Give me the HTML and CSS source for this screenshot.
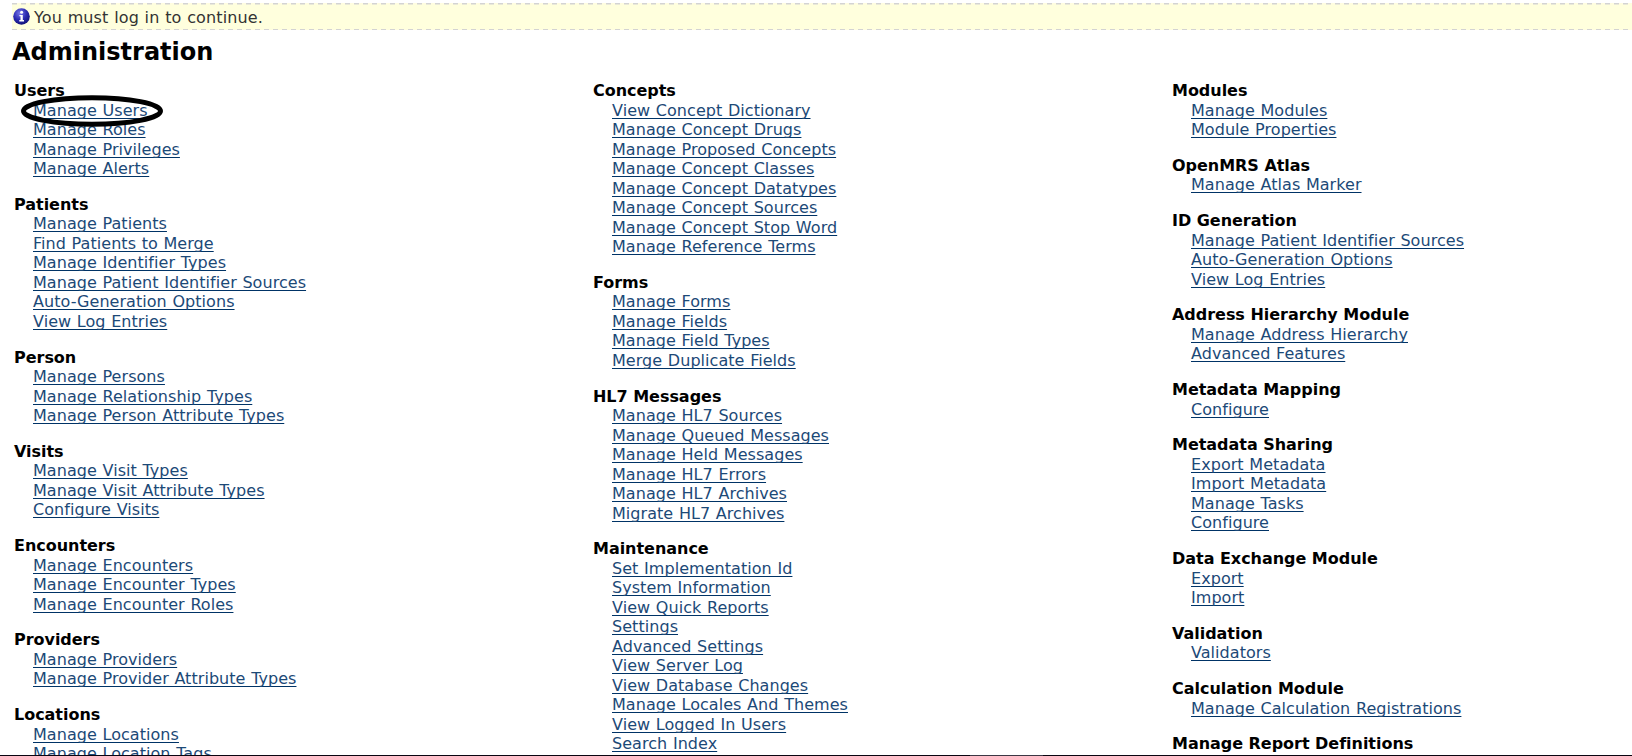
FILE: index.html
```html
<!DOCTYPE html>
<html lang="en">
<head>
<meta charset="utf-8">
<title>Administration</title>
<link rel="stylesheet" href="styles.css">
</head>
<body>
<div class="message">
<svg class="info" viewBox="0 0 17 17"><defs><radialGradient id="g" cx=".4" cy=".3" r=".75"><stop offset="0" stop-color="#7878e8"/><stop offset=".55" stop-color="#2a2ab0"/><stop offset="1" stop-color="#101070"/></radialGradient></defs><circle cx="8.5" cy="8.5" r="8.3" fill="url(#g)"/><circle cx="8.6" cy="4.2" r="1.5" fill="#fff"/><path d="M6.4 7h3.4v5h1.2v1.4H6.3V12h1.2V8.3H6.4z" fill="#fff"/></svg>
<span>You must log in to continue.</span>
</div>
<h1>Administration</h1>
<main class="columns">
<div class="column">
<section><h2>Users</h2><ul><li class="circled"><a href="#">Manage Users</a><svg class="ring" viewBox="0 0 144 32"><ellipse cx="72" cy="16" rx="68.5" ry="13.2"/></svg></li><li><a href="#">Manage Roles</a></li><li><a href="#">Manage Privileges</a></li><li><a href="#">Manage Alerts</a></li></ul></section>
<section><h2>Patients</h2><ul><li><a href="#">Manage Patients</a></li><li><a href="#">Find Patients to Merge</a></li><li><a href="#">Manage Identifier Types</a></li><li><a href="#">Manage Patient Identifier Sources</a></li><li><a href="#">Auto-Generation Options</a></li><li><a href="#">View Log Entries</a></li></ul></section>
<section><h2>Person</h2><ul><li><a href="#">Manage Persons</a></li><li><a href="#">Manage Relationship Types</a></li><li><a href="#">Manage Person Attribute Types</a></li></ul></section>
<section><h2>Visits</h2><ul><li><a href="#">Manage Visit Types</a></li><li><a href="#">Manage Visit Attribute Types</a></li><li><a href="#">Configure Visits</a></li></ul></section>
<section><h2>Encounters</h2><ul><li><a href="#">Manage Encounters</a></li><li><a href="#">Manage Encounter Types</a></li><li><a href="#">Manage Encounter Roles</a></li></ul></section>
<section><h2>Providers</h2><ul><li><a href="#">Manage Providers</a></li><li><a href="#">Manage Provider Attribute Types</a></li></ul></section>
<section><h2>Locations</h2><ul><li><a href="#">Manage Locations</a></li><li><a href="#">Manage Location Tags</a></li></ul></section>
</div>
<div class="column">
<section><h2>Concepts</h2><ul><li><a href="#">View Concept Dictionary</a></li><li><a href="#">Manage Concept Drugs</a></li><li><a href="#">Manage Proposed Concepts</a></li><li><a href="#">Manage Concept Classes</a></li><li><a href="#">Manage Concept Datatypes</a></li><li><a href="#">Manage Concept Sources</a></li><li><a href="#">Manage Concept Stop Word</a></li><li><a href="#">Manage Reference Terms</a></li></ul></section>
<section><h2>Forms</h2><ul><li><a href="#">Manage Forms</a></li><li><a href="#">Manage Fields</a></li><li><a href="#">Manage Field Types</a></li><li><a href="#">Merge Duplicate Fields</a></li></ul></section>
<section><h2>HL7 Messages</h2><ul><li><a href="#">Manage HL7 Sources</a></li><li><a href="#">Manage Queued Messages</a></li><li><a href="#">Manage Held Messages</a></li><li><a href="#">Manage HL7 Errors</a></li><li><a href="#">Manage HL7 Archives</a></li><li><a href="#">Migrate HL7 Archives</a></li></ul></section>
<section><h2>Maintenance</h2><ul><li><a href="#">Set Implementation Id</a></li><li><a href="#">System Information</a></li><li><a href="#">View Quick Reports</a></li><li><a href="#">Settings</a></li><li><a href="#">Advanced Settings</a></li><li><a href="#">View Server Log</a></li><li><a href="#">View Database Changes</a></li><li><a href="#">Manage Locales And Themes</a></li><li><a href="#">View Logged In Users</a></li><li><a href="#">Search Index</a></li></ul></section>
</div>
<div class="column">
<section><h2>Modules</h2><ul><li><a href="#">Manage Modules</a></li><li><a href="#">Module Properties</a></li></ul></section>
<section><h2>OpenMRS Atlas</h2><ul><li><a href="#">Manage Atlas Marker</a></li></ul></section>
<section><h2>ID Generation</h2><ul><li><a href="#">Manage Patient Identifier Sources</a></li><li><a href="#">Auto-Generation Options</a></li><li><a href="#">View Log Entries</a></li></ul></section>
<section><h2>Address Hierarchy Module</h2><ul><li><a href="#">Manage Address Hierarchy</a></li><li><a href="#">Advanced Features</a></li></ul></section>
<section><h2>Metadata Mapping</h2><ul><li><a href="#">Configure</a></li></ul></section>
<section><h2>Metadata Sharing</h2><ul><li><a href="#">Export Metadata</a></li><li><a href="#">Import Metadata</a></li><li><a href="#">Manage Tasks</a></li><li><a href="#">Configure</a></li></ul></section>
<section><h2>Data Exchange Module</h2><ul><li><a href="#">Export</a></li><li><a href="#">Import</a></li></ul></section>
<section><h2>Validation</h2><ul><li><a href="#">Validators</a></li></ul></section>
<section><h2>Calculation Module</h2><ul><li><a href="#">Manage Calculation Registrations</a></li></ul></section>
<section><h2>Manage Report Definitions</h2></section>
</div>
</main>
<div class="edge"></div>
</body>
</html>
```
FILE: styles.css
```css
* { box-sizing: border-box; }
body {
  position: relative;
  margin: 0;
  height: 756px;
  overflow: hidden;
  display: flex;
  flex-direction: column;
  padding: 3px 0 0 12px;
  background: #fff;
  color: #000;
  font: 16px/19.5px Verdana, "DejaVu Sans", sans-serif;
  font-variant-ligatures: none;
}
.edge {
  position: absolute;
  left: 0;
  right: 0;
  bottom: 0;
  height: 1px;
  background: linear-gradient(90deg, #0a0410 970px, #3c3644 970px 1043px, #0a0410 1043px);
}
.message {
  flex: none;
  display: flex;
  align-items: center;
  height: 27px;
  color: #333;
  letter-spacing: 0.12px;
  word-spacing: 0.5px;
  background:
    repeating-linear-gradient(90deg, #d3d3d3 0 5px, #fffde0 5px 9px) 0 0 / 100% 1.5px no-repeat,
    repeating-linear-gradient(90deg, #d3d3d3 0 5px, #fffde0 5px 9px) 0 100% / 100% 1.5px no-repeat,
    #ffffdd;
}
.message span { padding-top: 2px; }
.info { width: 17px; height: 17px; margin: 0 4px 0 1px; }
h1 { flex: none; margin: 8px 0 0; font-size: 24px; line-height: 29px; }
.columns {
  flex: none;
  display: grid;
  grid-template-columns: 579px 579px 1fr;
  padding: 14px 0 0 2px;
}
.column { display: flex; flex-direction: column; gap: 16.25px; }
h2 { margin: 0; font-size: 16px; line-height: 19.5px; letter-spacing: -0.03px; }
ul { margin: 0; padding: 0 0 0 19px; list-style: none; }
li { height: 19.5px; white-space: nowrap; }
a {
  color: #1c4977;
  letter-spacing: 0.05px;
  word-spacing: 0.5px;
  text-decoration: underline 1px #003366;
  text-underline-offset: 2px;
  text-decoration-skip-ink: none;
}
.circled { position: relative; }
.ring { position: absolute; left: -13px; top: -6px; width: 144px; height: 32px; }
.ring ellipse { fill: none; stroke: #000; stroke-width: 5; }
```
